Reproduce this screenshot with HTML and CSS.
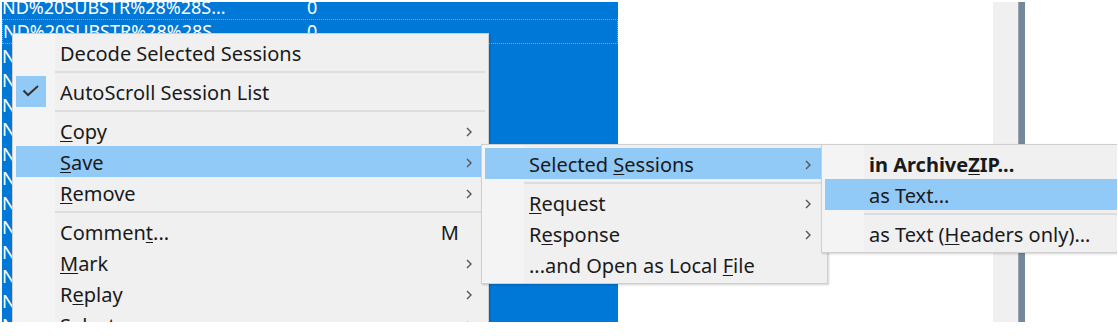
FILE: index.html
```html
<!DOCTYPE html>
<html>
<head>
<meta charset="utf-8">
<link rel="stylesheet" href="styles.css">
</head>
<body>
<div class="shot">
  <div class="top">
    <div class="sessions">
      <div class="rows">
        <div class="row"><span class="url">ND%20SUBSTR%28%28S...</span><span class="num">0</span></div>
        <div class="row focus"><span class="url">ND%20SUBSTR%28%28S...</span><span class="num">0</span></div>
        <div class="row"><span class="url">ND%20SUBSTR%28%28S...</span><span class="num">0</span></div>
        <div class="row"><span class="url">ND%20SUBSTR%28%28S...</span><span class="num">0</span></div>
        <div class="row"><span class="url">ND%20SUBSTR%28%28S...</span><span class="num">0</span></div>
        <div class="row"><span class="url">ND%20SUBSTR%28%28S...</span><span class="num">0</span></div>
        <div class="row"><span class="url">ND%20SUBSTR%28%28S...</span><span class="num">0</span></div>
        <div class="row"><span class="url">ND%20SUBSTR%28%28S...</span><span class="num">0</span></div>
        <div class="row"><span class="url">ND%20SUBSTR%28%28S...</span><span class="num">0</span></div>
        <div class="row"><span class="url">ND%20SUBSTR%28%28S...</span><span class="num">0</span></div>
        <div class="row"><span class="url">ND%20SUBSTR%28%28S...</span><span class="num">0</span></div>
        <div class="row"><span class="url">ND%20SUBSTR%28%28S...</span><span class="num">0</span></div>
        <div class="row"><span class="url">ND%20SUBSTR%28%28S...</span><span class="num">0</span></div>
        <div class="row"><span class="url">ND%20SUBSTR%28%28S...</span><span class="num">0</span></div>
      </div>
    </div>
    <div class="gap"></div>
    <div class="vcol"></div>
    <div class="vbar"></div>
  </div>

  <div class="menu main-menu">
    <div class="item"><span class="icon"></span><span class="label">Decode Selected Sessions</span><span class="key"></span><span class="arrow"></span></div>
    <div class="sep"></div>
    <div class="item"><span class="icon checked"><svg width="30" height="31" viewBox="0 0 30 31"><polyline points="7.5,14.5 12,19 22,10" fill="none" stroke="#333" stroke-width="2"/></svg></span><span class="label">AutoScroll Session List</span><span class="key"></span><span class="arrow"></span></div>
    <div class="sep"></div>
    <div class="item"><span class="icon"></span><span class="label"><u>C</u>opy</span><span class="key"></span><span class="arrow"><svg width="6" height="10" viewBox="0 0 6 10"><polyline points="1,1 5,5 1,9" fill="none" stroke="#555" stroke-width="1.4"/></svg></span></div>
    <div class="item hot"><span class="icon"></span><span class="label"><u>S</u>ave</span><span class="key"></span><span class="arrow"><svg width="6" height="10" viewBox="0 0 6 10"><polyline points="1,1 5,5 1,9" fill="none" stroke="#555" stroke-width="1.4"/></svg></span></div>
    <div class="item"><span class="icon"></span><span class="label"><u>R</u>emove</span><span class="key"></span><span class="arrow"><svg width="6" height="10" viewBox="0 0 6 10"><polyline points="1,1 5,5 1,9" fill="none" stroke="#555" stroke-width="1.4"/></svg></span></div>
    <div class="sep"></div>
    <div class="item"><span class="icon"></span><span class="label">Commen<u>t</u>...</span><span class="key">M</span><span class="arrow"></span></div>
    <div class="item"><span class="icon"></span><span class="label"><u>M</u>ark</span><span class="key"></span><span class="arrow"><svg width="6" height="10" viewBox="0 0 6 10"><polyline points="1,1 5,5 1,9" fill="none" stroke="#555" stroke-width="1.4"/></svg></span></div>
    <div class="item"><span class="icon"></span><span class="label">R<u>e</u>play</span><span class="key"></span><span class="arrow"><svg width="6" height="10" viewBox="0 0 6 10"><polyline points="1,1 5,5 1,9" fill="none" stroke="#555" stroke-width="1.4"/></svg></span></div>
    <div class="item"><span class="icon"></span><span class="label">Select</span><span class="key"></span><span class="arrow"><svg width="6" height="10" viewBox="0 0 6 10"><polyline points="1,1 5,5 1,9" fill="none" stroke="#555" stroke-width="1.4"/></svg></span></div>
  </div>

  <div class="menu sub-menu">
    <div class="item hot"><span class="icon"></span><span class="label">Selected <u>S</u>essions</span><span class="key"></span><span class="arrow"><svg width="6" height="10" viewBox="0 0 6 10"><polyline points="1,1 5,5 1,9" fill="none" stroke="#555" stroke-width="1.4"/></svg></span></div>
    <div class="sep"></div>
    <div class="item"><span class="icon"></span><span class="label"><u>R</u>equest</span><span class="key"></span><span class="arrow"><svg width="6" height="10" viewBox="0 0 6 10"><polyline points="1,1 5,5 1,9" fill="none" stroke="#555" stroke-width="1.4"/></svg></span></div>
    <div class="item"><span class="icon"></span><span class="label">R<u>e</u>sponse</span><span class="key"></span><span class="arrow"><svg width="6" height="10" viewBox="0 0 6 10"><polyline points="1,1 5,5 1,9" fill="none" stroke="#555" stroke-width="1.4"/></svg></span></div>
    <div class="item"><span class="icon"></span><span class="label">...and Open as Local <u>F</u>ile</span><span class="key"></span><span class="arrow"></span></div>
  </div>

  <div class="menu sub-menu2">
    <div class="item"><span class="icon"></span><span class="label bold">in Archive<u>Z</u>IP...</span><span class="key"></span><span class="arrow"></span></div>
    <div class="item hot"><span class="icon"></span><span class="label">as Text...</span><span class="key"></span><span class="arrow"></span></div>
    <div class="sep"></div>
    <div class="item"><span class="icon"></span><span class="label">as Text (<u>H</u>eaders only)...</span><span class="key"></span><span class="arrow"></span></div>
  </div>
</div>
</body>
</html>
```

FILE: styles.css
```css
html, body {
  margin: 0;
  padding: 0;
  background: #ffffff;
}

body {
  font-family: "Noto Sans", "Open Sans", sans-serif;
  font-size: 18px;
  color: #1a1a1a;
}

.shot {
  position: relative;
  margin: 2px 0 0 2px;
  width: 1115px;
  height: 320px;
  overflow: hidden;
}

.top {
  display: flex;
  height: 320px;
}

.sessions {
  width: 616px;
  background: #0078d7;
  color: #ffffff;
  overflow: hidden;
}

.rows {
  margin-top: -7.5px;
}

.row {
  display: flex;
  align-items: center;
  height: 24.5px;
  box-sizing: border-box;
  white-space: nowrap;
}

.row .url {
  width: 305px;
  overflow: hidden;
}

.row.focus {
  border: 1px dotted #c59b6a;
}

.row.focus .url {
  width: 304px;
}

.gap {
  width: 375px;
}

.vcol {
  width: 25px;
  background: #f0f0f0;
}

.vbar {
  width: 7px;
  background: #74889b;
  border-left: 1px solid #9aa5b0;
  box-sizing: border-box;
}

.menu {
  position: absolute;
  box-sizing: border-box;
  padding: 3px;
  border: 1px solid #cfcfcf;
  background: linear-gradient(to right, #f4f4f4 0, #f4f4f4 42px, #f0f0f0 42px);
  box-shadow: 1px 1px 2px rgba(0, 0, 0, 0.18);
  font-size: 20px;
}

.main-menu {
  left: 10px;
  top: 31px;
  width: 477px;
}

.sub-menu {
  left: 479px;
  top: 142px;
  width: 347px;
}

.sub-menu2 {
  left: 819px;
  top: 142px;
  width: 310px;
}

.item {
  display: flex;
  align-items: center;
  height: 31px;
  padding-top: 2px;
  box-sizing: border-box;
  white-space: nowrap;
}

.item.hot {
  background: #91c9f7;
}

.icon {
  width: 30px;
  height: 31px;
  margin-top: -2px;
  margin-right: 14px;
  flex: none;
}

.icon.checked {
  background: #91c9f7;
}

.icon svg {
  display: block;
}

.label {
  flex: 1;
}

.label u {
  text-decoration-thickness: 1px;
  text-underline-offset: 2px;
}

.label.bold {
  font-weight: bold;
}

.key {
  flex: none;
}

.arrow {
  width: 26px;
  flex: none;
  display: flex;
  justify-content: flex-end;
  padding-right: 13px;
  box-sizing: border-box;
}

.arrow svg {
  display: block;
}

.sep {
  height: 8px;
  margin-left: 39px;
  display: flex;
  align-items: center;
}

.sep::after {
  content: "";
  flex: 1;
  height: 2px;
  background: #dddddd;
}
```
